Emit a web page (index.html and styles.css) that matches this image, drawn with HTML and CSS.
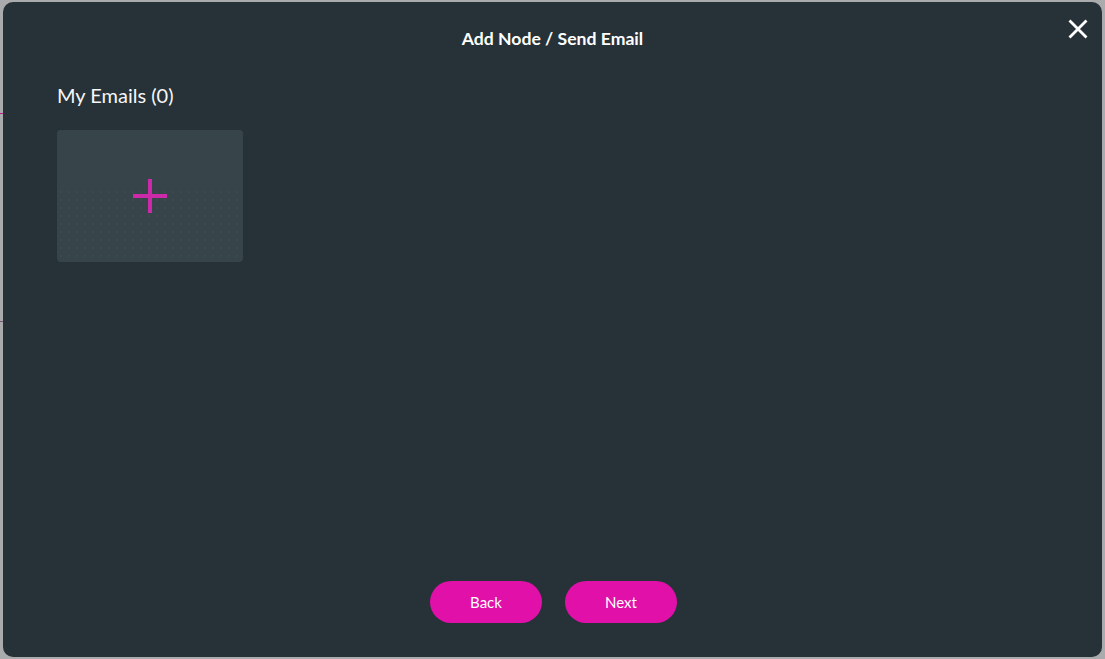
FILE: index.html
```html
<!DOCTYPE html>
<html>
<head>
<meta charset="utf-8">
<link rel="stylesheet" href="styles.css">
</head>
<body>
<div class="backdrop">
  <span class="edge-mark edge-mark-top"></span>
  <span class="edge-mark edge-mark-bottom"></span>
  <div class="modal">
    <header class="modal-header">
      <h1 class="modal-title">Add Node / Send Email</h1>
      <button class="close-btn" aria-label="Close">
        <svg width="20" height="20" viewBox="0 0 20 20"><path d="M1.5 1.5 L18.5 18.5 M18.5 1.5 L1.5 18.5" stroke="#ffffff" stroke-width="2.8" stroke-linecap="butt"/></svg>
      </button>
    </header>
    <section class="modal-body">
      <h2 class="section-title">My Emails (0)</h2>
      <div class="email-grid">
        <div class="add-card">
          <svg width="36" height="36" viewBox="0 0 36 36"><path d="M18 1 V35 M1 18 H35" stroke="#cc2aa8" stroke-width="4"/></svg>
        </div>
      </div>
    </section>
    <footer class="modal-footer">
      <button class="pill-btn">Back</button>
      <button class="pill-btn">Next</button>
    </footer>
  </div>
</div>
</body>
</html>
```
FILE: styles.css
```css
html, body {
  margin: 0;
  padding: 0;
  height: 100%;
}
body {
  background: #a9abac;
  font-family: Lato, "Noto Sans", sans-serif;
  overflow: hidden;
}
.backdrop {
  position: relative;
  height: 659px;
  padding: 2px 3px;
  box-sizing: border-box;
  display: flex;
}
.edge-mark {
  position: absolute;
  left: 0;
  width: 3px;
  height: 1px;
  background: #c0168f;
}
.edge-mark-top { top: 113px; }
.edge-mark-bottom { top: 321px; background: #7a5470; }
.modal {
  position: relative;
  flex: 1;
  background: #263238;
  border-radius: 10px;
  display: flex;
  flex-direction: column;
}
.modal-header {
  padding-top: 27px;
  text-align: center;
}
.modal-title {
  margin: 0;
  font-size: 17.6px;
  line-height: 20px;
  font-weight: 700;
  color: #ffffff;
}
.close-btn {
  position: absolute;
  top: 15px;
  right: 12px;
  width: 24px;
  height: 24px;
  padding: 0;
  border: 0;
  background: transparent;
  display: flex;
  align-items: center;
  justify-content: center;
  cursor: pointer;
}
.modal-body {
  padding: 35px 54px 0;
}
.section-title {
  margin: 0;
  font-size: 20px;
  line-height: 22px;
  font-weight: 400;
  color: #f6f7f8;
}
.email-grid {
  margin-top: 24px;
  display: flex;
}
.add-card {
  width: 186px;
  height: 132px;
  border-radius: 4px;
  background-color: #37444a;
  background-image: radial-gradient(circle, rgba(84,100,106,0.3) 0.6px, transparent 0.9px);
  background-size: 8px 8px;
  background-position: 0 58px;
  display: flex;
  align-items: center;
  justify-content: center;
  position: relative;
  overflow: hidden;
}
.add-card::before {
  content: "";
  position: absolute;
  left: 0; right: 0; top: 0;
  height: 56px;
  background: #37444a;
}
.add-card svg {
  position: relative;
}
.modal-footer {
  margin-top: auto;
  padding: 0 0 34px 2px;
  display: flex;
  justify-content: center;
  gap: 23px;
}
.pill-btn {
  width: 112px;
  height: 42px;
  border: 0;
  border-radius: 21px;
  background: #e010a8;
  color: #ffffff;
  font-family: Lato, "Noto Sans", sans-serif;
  font-size: 15px;
  cursor: pointer;
}
```
